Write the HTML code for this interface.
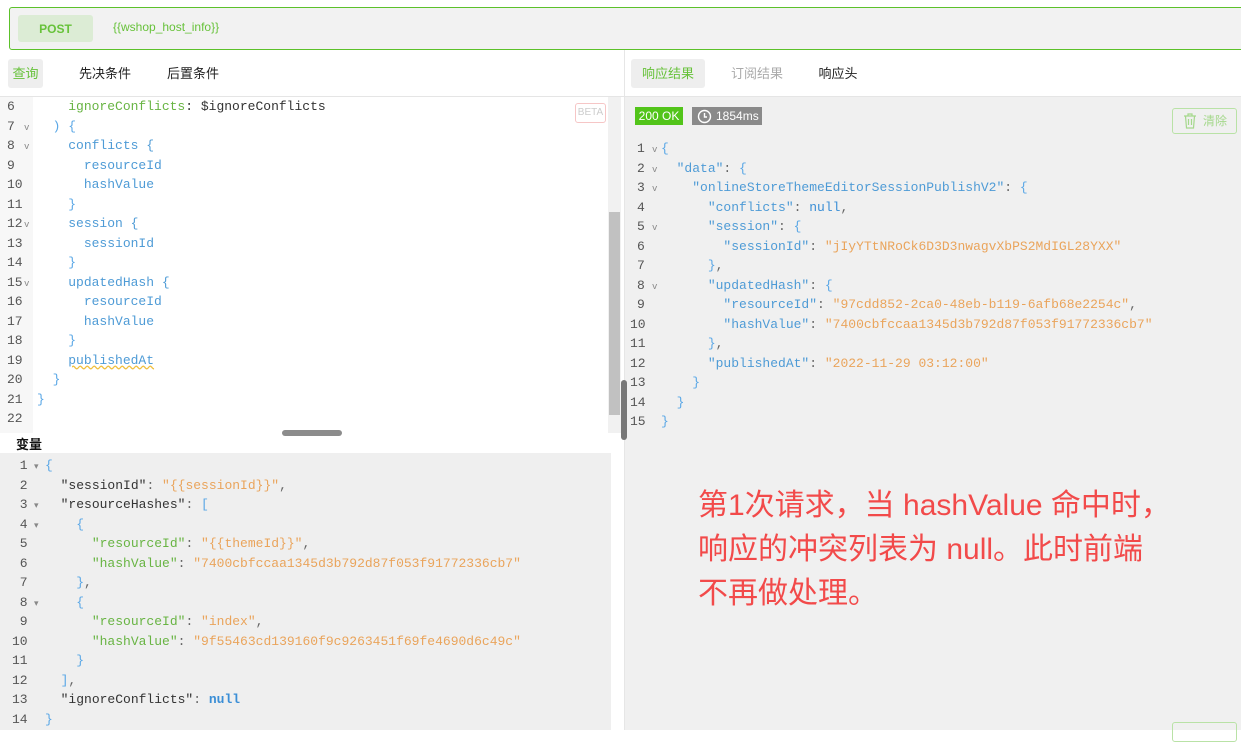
<!DOCTYPE html>
<html><head><meta charset="utf-8"><style>
*{margin:0;padding:0;box-sizing:border-box}
body{width:1241px;height:730px;overflow:hidden;background:#fff;position:relative;font-family:"Liberation Sans","Noto Sans CJK SC",sans-serif}
.a{position:absolute}
.code{font-family:"Liberation Mono",monospace;font-size:13px;white-space:pre;line-height:19.5px}
.ln{position:absolute;font-family:"Liberation Mono",monospace;font-size:13px;color:#555;white-space:normal}
.ln div{height:19.5px;line-height:19.5px;position:relative;white-space:pre}
.ln i{position:absolute;font-style:normal;font-size:9px;color:#888;line-height:19.5px;top:2px}
.k{color:#4e9bd6}.s{color:#eaa45b}.p{color:#666}.b{color:#5aa7e6}.n{color:#3a8ed6}.d{color:#333}.v{color:#68b443}
.tab{position:absolute;font-size:13px;line-height:29px;text-align:center;border-radius:3px}
</style></head><body>
<div class="a" style="left:9px;top:7px;width:1240px;height:43px;border:1px solid #5cc12a;border-radius:3px;background:#f2f2f2"></div>
<div class="a" style="left:18px;top:15px;width:75px;height:27px;background:#dcecd5;border-radius:3px;color:#67c23a;font-weight:bold;font-size:12px;text-align:center;line-height:29px">POST</div>
<div class="a" style="left:113px;top:20px;font-size:12px;color:#67c23a">{{wshop_host_info}}</div>
<div class="tab" style="left:8px;top:59px;width:35px;background:#eee;color:#67c23a">查询</div>
<div class="tab" style="left:70px;top:59px;width:70px;color:#222">先决条件</div>
<div class="tab" style="left:158px;top:59px;width:70px;color:#222">后置条件</div>
<div class="a" style="left:624px;top:50px;width:1px;height:680px;background:#e6e6e6"></div>
<div class="tab" style="left:631px;top:59px;width:74px;background:#eee;color:#67c23a">响应结果</div>
<div class="tab" style="left:722px;top:59px;width:70px;color:#aaa">订阅结果</div>
<div class="tab" style="left:808px;top:59px;width:60px;color:#222">响应头</div>
<div class="a" style="left:0;top:96px;width:1241px;height:1px;background:#e5e5e5"></div>
<div class="a" style="left:0;top:97px;width:33px;height:336px;background:#f7f7f7"></div>
<div class="a" style="left:608px;top:97px;width:13px;height:336px;background:#f1f1f1"></div>
<div class="a" style="left:609px;top:212px;width:11px;height:203px;background:#c1c1c1"></div>
<div class="a" style="left:575px;top:103px;width:31px;height:20px;border:1px solid #f6c6c6;border-radius:3px;color:#ccc;font-size:10px;text-align:center;line-height:18px">BETA</div>
<div class="ln" style="left:7px;top:97px"><div>6</div><div>7<i style="left:17px">v</i></div><div>8<i style="left:17px">v</i></div><div>9</div><div>10</div><div>11</div><div>12<i style="left:17px">v</i></div><div>13</div><div>14</div><div>15<i style="left:17px">v</i></div><div>16</div><div>17</div><div>18</div><div>19</div><div>20</div><div>21</div><div>22</div></div>
<div class="a code" style="left:37px;top:97px">    <span class="v">ignoreConflicts</span><span class="d">: $ignoreConflicts</span>
  <span class="b">) {</span>
    <span class="k">conflicts {</span>
      <span class="k">resourceId</span>
      <span class="k">hashValue</span>
    <span class="b">}</span>
    <span class="k">session {</span>
      <span class="k">sessionId</span>
    <span class="b">}</span>
    <span class="k">updatedHash {</span>
      <span class="k">resourceId</span>
      <span class="k">hashValue</span>
    <span class="b">}</span>
    <span class="k" style="text-decoration:underline wavy #f0c040">publishedAt</span>
  <span class="b">}</span>
<span class="b">}</span></div>
<div class="a" style="left:282px;top:430px;width:60px;height:6px;border-radius:3px;background:#8c8c8c"></div>
<div class="a" style="left:16px;top:434px;font-size:13px;font-weight:bold;color:#111">变量</div>
<div class="a" style="left:0;top:453px;width:611px;height:277px;background:#efefef"></div>
<div class="ln" style="left:12px;top:456px"><div> 1<i style="left:22px">▾</i></div><div> 2</div><div> 3<i style="left:22px">▾</i></div><div> 4<i style="left:22px">▾</i></div><div> 5</div><div> 6</div><div> 7</div><div> 8<i style="left:22px">▾</i></div><div> 9</div><div>10</div><div>11</div><div>12</div><div>13</div><div>14</div></div>
<div class="a code" style="left:45px;top:456px"><span class="b">{</span>
  <span class="d">"sessionId"</span><span class="p">: </span><span class="s">"{{sessionId}}"</span><span class="p">,</span>
  <span class="d">"resourceHashes"</span><span class="p">: </span><span class="b">[</span>
    <span class="b">{</span>
      <span class="v">"resourceId"</span><span class="p">: </span><span class="s">"{{themeId}}"</span><span class="p">,</span>
      <span class="v">"hashValue"</span><span class="p">: </span><span class="s">"7400cbfccaa1345d3b792d87f053f91772336cb7"</span>
    <span class="b">}</span><span class="p">,</span>
    <span class="b">{</span>
      <span class="v">"resourceId"</span><span class="p">: </span><span class="s">"index"</span><span class="p">,</span>
      <span class="v">"hashValue"</span><span class="p">: </span><span class="s">"9f55463cd139160f9c9263451f69fe4690d6c49c"</span>
    <span class="b">}</span>
  <span class="b">]</span><span class="p">,</span>
  <span class="d">"ignoreConflicts"</span><span class="p">: </span><span class="n" style="font-weight:bold">null</span>
<span class="b">}</span></div>
<div class="a" style="left:625px;top:97px;width:616px;height:633px;background:#f0f0f0"></div>
<div class="a" style="left:621px;top:380px;width:6px;height:60px;border-radius:3px;background:#777"></div>
<div class="a" style="left:635px;top:107px;width:48px;height:18px;background:#52c41a;color:#fff;font-size:12px;text-align:center;line-height:18px">200 OK</div>
<div class="a" style="left:692px;top:107px;width:70px;height:18px;background:#8a8a8a;color:#fff;font-size:12px;line-height:18px;padding-left:24px">1854ms</div>
<svg class="a" style="left:697px;top:109px" width="15" height="15" viewBox="0 0 15 15"><circle cx="7.5" cy="7.5" r="6" fill="none" stroke="#fff" stroke-width="1.4"/><path d="M7.5 4v4h2.5" fill="none" stroke="#fff" stroke-width="1.4"/></svg>
<div class="a" style="left:1172px;top:108px;width:65px;height:26px;border:1px solid #b9e2a6;border-radius:3px;color:#a5d88c;font-size:12px;line-height:24px;padding-left:30px">清除</div>
<svg class="a" style="left:1183px;top:113px" width="14" height="16" viewBox="0 0 14 16"><path d="M1 3h12M5 3V1h4v2M2.5 3l1 12h7l1-12M5.5 6v6M8.5 6v6" fill="none" stroke="#a5d88c" stroke-width="1.2"/></svg>
<div class="ln" style="left:637px;top:139px"><div>1<i style="left:15px">v</i></div><div>2<i style="left:15px">v</i></div><div>3<i style="left:15px">v</i></div><div>4</div><div>5<i style="left:15px">v</i></div><div>6</div><div>7</div><div>8<i style="left:15px">v</i></div><div>9</div><div style="margin-left:-7px">10</div><div style="margin-left:-7px">11</div><div style="margin-left:-7px">12</div><div style="margin-left:-7px">13</div><div style="margin-left:-7px">14</div><div style="margin-left:-7px">15</div></div>
<div class="a code" style="left:661px;top:139px"><span class="b">{</span>
  <span class="k">"data"</span><span class="p">: </span><span class="b">{</span>
    <span class="k">"onlineStoreThemeEditorSessionPublishV2"</span><span class="p">: </span><span class="b">{</span>
      <span class="k">"conflicts"</span><span class="p">: </span><span class="n">null</span><span class="p">,</span>
      <span class="k">"session"</span><span class="p">: </span><span class="b">{</span>
        <span class="k">"sessionId"</span><span class="p">: </span><span class="s">"jIyYTtNRoCk6D3D3nwagvXbPS2MdIGL28YXX"</span>
      <span class="b">}</span><span class="p">,</span>
      <span class="k">"updatedHash"</span><span class="p">: </span><span class="b">{</span>
        <span class="k">"resourceId"</span><span class="p">: </span><span class="s">"97cdd852-2ca0-48eb-b119-6afb68e2254c"</span><span class="p">,</span>
        <span class="k">"hashValue"</span><span class="p">: </span><span class="s">"7400cbfccaa1345d3b792d87f053f91772336cb7"</span>
      <span class="b">}</span><span class="p">,</span>
      <span class="k">"publishedAt"</span><span class="p">: </span><span class="s">"2022-11-29 03:12:00"</span>
    <span class="b">}</span>
  <span class="b">}</span>
<span class="b">}</span></div>
<div class="a" style="left:698px;top:484px;font-size:30px;line-height:44px;color:#f24a4a;white-space:nowrap">第1次请求，当 hashValue 命中时，<br>响应的冲突列表为 null。此时前端<br>不再做处理。</div>
<div class="a" style="left:1172px;top:722px;width:65px;height:20px;border:1px solid #b9e2a6;border-radius:3px"></div>
</body></html>
